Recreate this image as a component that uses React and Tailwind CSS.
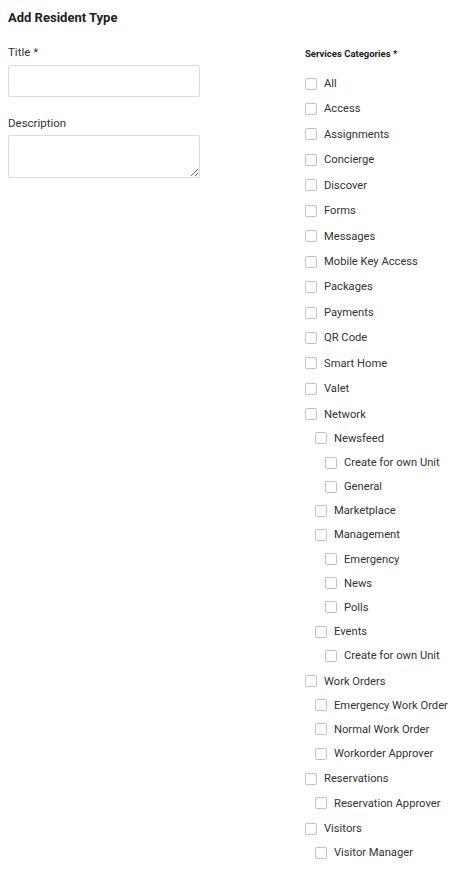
import React from "react";

const tree = [
  { label: "All" },
  { label: "Access" },
  { label: "Assignments" },
  { label: "Concierge" },
  { label: "Discover" },
  { label: "Forms" },
  { label: "Messages" },
  { label: "Mobile Key Access" },
  { label: "Packages" },
  { label: "Payments" },
  { label: "QR Code" },
  { label: "Smart Home" },
  { label: "Valet" },
  {
    label: "Network",
    children: [
      { label: "Newsfeed", children: [{ label: "Create for own Unit" }, { label: "General" }] },
      { label: "Marketplace" },
      { label: "Management", children: [{ label: "Emergency" }, { label: "News" }, { label: "Polls" }] },
      { label: "Events", children: [{ label: "Create for own Unit" }] },
    ],
  },
  {
    label: "Work Orders",
    children: [{ label: "Emergency Work Order" }, { label: "Normal Work Order" }, { label: "Workorder Approver" }],
  },
  { label: "Reservations", children: [{ label: "Reservation Approver" }] },
  { label: "Visitors", children: [{ label: "Visitor Manager" }] },
];

function Row({ label }) {
  return (
    <div className="flex h-[24.15px] items-center gap-[7px]">
      <span className="block h-3 w-3 shrink-0 rounded-[2px] border border-[#c2c2c2] bg-white" />
      <span className="text-[11.2px] leading-none text-[#333]">{label}</span>
    </div>
  );
}

function Node({ node }) {
  return (
    <li>
      <Row label={node.label} />
      {node.children && (
        <ul className="pl-[10px]">
          {node.children.map((c, i) => (
            <Node key={i} node={c} />
          ))}
        </ul>
      )}
    </li>
  );
}

export default function App() {
  return (
    <div
      className="w-[472px] min-h-[876px] bg-white text-[#222]"
      style={{ fontFamily: "Roboto, 'Liberation Sans', sans-serif" }}
    >
      <div className="px-2 pt-2">
        <h1 className="h-5 text-[13px] font-bold leading-5 text-[#222]">Add Resident Type</h1>
      </div>
      <div className="flex">
        <div className="w-[305px] shrink-0 pl-2 pt-4">
          <label className="block h-4 text-[11.5px] leading-4 text-[#333]">Title *</label>
          <input
            type="text"
            className="mt-[5px] block h-8 w-[192px] rounded-[2px] border border-[#dcdcdc] bg-white outline-none"
          />
          <label className="mt-[18px] block h-4 text-[11.5px] leading-4 text-[#333]">Description</label>
          <textarea className="mt-1 block h-[43px] w-[192px] rounded-[2px] border border-[#dcdcdc] bg-white outline-none" />
        </div>
        <div className="pt-[19px]">
          <div className="h-[14px] text-[9.5px] font-bold leading-[14px] text-[#222]">Services Categories *</div>
          <ul className="mt-[10.5px] pb-2">
            {tree.map((n, i) => (
              <div key={i} className="mt-[1.3px]">
                <Node node={n} />
              </div>
            ))}
          </ul>
        </div>
      </div>
    </div>
  );
}
